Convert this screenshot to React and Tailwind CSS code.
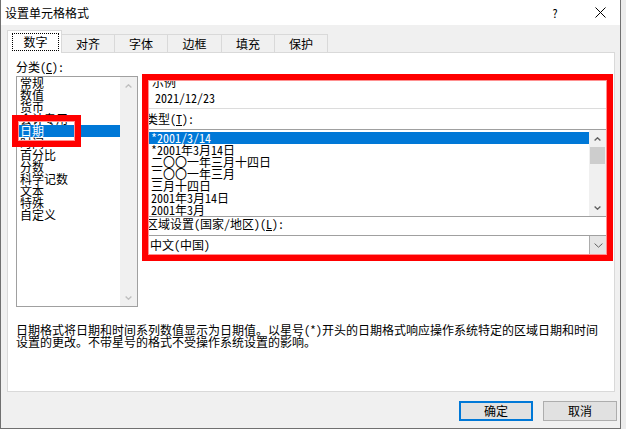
import React from "react";

function Chev({ up, color, w = 7, h = 4, sw = 1.4 }) {
  const pts = up
    ? `0.6,${h - 0.6} ${w / 2},0.8 ${w - 0.6},${h - 0.6}`
    : `0.6,0.6 ${w / 2},${h - 0.8} ${w - 0.6},0.6`;
  return (
    <svg width={w} height={h} viewBox={`0 0 ${w} ${h}`} className="block">
      <polyline points={pts} fill="none" stroke={color} strokeWidth={sw} />
    </svg>
  );
}

const cats = ["常规", "数值", "货币", "会计专用", "日期", "时间", "百分比", "分数", "科学记数", "文本", "特殊", "自定义"];
const types = ["*2001/3/14", "*2001年3月14日", "二〇〇一年三月十四日", "二〇〇一年三月", "三月十四日", "2001年3月14日", "2001年3月"];

export default function App() {
  return (
    <div className="relative w-[626px] h-[429px] overflow-hidden bg-[#ececec] text-[12px] leading-[12px] text-black font-[family-name:'Noto_Sans_Mono_CJK_SC','Noto_Sans_CJK_SC',sans-serif]">
      <div className="flex flex-col w-[621px] h-[429px] border-l border-r border-b border-[#707070] bg-[#f0f0f0]">
        {/* title bar */}
        <div className="flex items-center h-[25px] bg-white pl-[4px] pr-[14px] shrink-0">
          <span>设置单元格格式</span>
          <span className="ml-auto">?</span>
          <svg className="ml-[37px] block" width="11" height="11" viewBox="0 0 11 11">
            <path d="M0.5 0.5 L10.5 10.5 M10.5 0.5 L0.5 10.5" stroke="#000" strokeWidth="1" fill="none" />
          </svg>
        </div>

        {/* tabs */}
        <div className="flex items-end h-[27px] pl-[6px] shrink-0">
          <div className="relative z-10 -mb-px w-[55px] h-[23px] bg-white border border-b-0 border-[#d9d9d9] pt-[2px] pl-[4px]">
            <div className="w-[47px] h-[18px] border border-dotted border-black flex items-center justify-center">数字</div>
          </div>
          <div className="w-[53px] h-[18px] border-t border-r border-[#d9d9d9] flex items-center justify-center">对齐</div>
          <div className="w-[53px] h-[18px] border-t border-r border-[#d9d9d9] flex items-center justify-center">字体</div>
          <div className="w-[54px] h-[18px] border-t border-r border-[#d9d9d9] flex items-center justify-center">边框</div>
          <div className="w-[53px] h-[18px] border-t border-r border-[#d9d9d9] flex items-center justify-center">填充</div>
          <div className="w-[53px] h-[18px] border-t border-r border-[#d9d9d9] flex items-center justify-center">保护</div>
        </div>

        {/* panel */}
        <div className="ml-[6px] w-[608px] h-[340px] shrink-0 bg-white border border-[#d9d9d9] pt-[8px] pl-[8px] flex flex-col">
          <div className="flex items-start">
            {/* left column */}
            <div className="flex flex-col w-[122px]">
              <div>
                分类(<span className="underline">C</span>):
              </div>
              <div className="mt-[3px] flex h-[231px] border border-[#a0a0a0] bg-white">
                <div className="flex-1 flex flex-col">
                  {cats.map((c, i) => (
                    <div
                      key={c}
                      className={i === 4 ? "h-[12px] pl-[3px] bg-[#0078d7] text-white whitespace-nowrap" : "h-[12px] pl-[3px] whitespace-nowrap"}
                    >
                      {c}
                    </div>
                  ))}
                </div>
                <div className="w-[17px] bg-[#f0f0f0] flex flex-col justify-between">
                  <div className="h-[17px] flex items-center justify-center">
                    <Chev up color="#bfbfbf" />
                  </div>
                  <div className="h-[17px] flex items-center justify-center">
                    <Chev color="#bfbfbf" />
                  </div>
                </div>
              </div>
            </div>

            {/* right column */}
            <div className="ml-[8px] w-[461px] flex flex-col pt-[15px]">
              <div className="border-b border-[#dcdcdc] pb-[4px]">
                <div className="pl-[6px]">示例</div>
                <div className="pl-[9px] mt-[4px]">2021/12/23</div>
              </div>
              <div className="mt-[4px]">
                类型(<span className="underline">T</span>):
              </div>
              <div className="mt-[4px] ml-px flex h-[88px] border border-[#a0a0a0] bg-white">
                <div className="flex-1 flex flex-col pt-[2px] pl-px">
                  {types.map((t, i) => (
                    <div
                      key={t}
                      className={i === 0 ? "h-[12px] pl-[2px] bg-[#0078d7] text-white whitespace-nowrap" : "h-[12px] pl-[2px] whitespace-nowrap"}
                    >
                      {t}
                    </div>
                  ))}
                </div>
                <div className="w-[17px] bg-[#f0f0f0] flex flex-col">
                  <div className="h-[17px] flex items-center justify-center">
                    <Chev up color="#606060" />
                  </div>
                  <div className="h-[17px] mx-px bg-[#cdcdcd]" />
                  <div className="flex-1" />
                  <div className="h-[17px] flex items-center justify-center">
                    <Chev color="#606060" />
                  </div>
                </div>
              </div>
              <div className="mt-[1px] whitespace-nowrap">
                区域设置(国家/地区)(<span className="underline">L</span>):
              </div>
              <div className="mt-[5px] ml-px flex items-stretch h-[20px] border border-[#a0a0a0] bg-white">
                <div className="flex-1 flex items-center pl-[2px]">中文(中国)</div>
                <div className="w-[17px] bg-[#e5e5e5] border-l border-[#acacac] flex items-center justify-center">
                  <Chev color="#606060" w={9} h={5} sw={1} />
                </div>
              </div>
            </div>
          </div>

          <div className="mt-[17px] whitespace-nowrap">
            日期格式将日期和时间系列数值显示为日期值。以星号(*)开头的日期格式响应操作系统特定的区域日期和时间
            <br />
            设置的更改。不带星号的格式不受操作系统设置的影响。
          </div>
        </div>

        {/* buttons */}
        <div className="flex justify-end gap-[10px] pt-[9px] pr-[3px]">
          <div className="w-[74px] h-[20px] border-2 border-[#0078d7] bg-[#e1e1e1] flex items-center justify-center">确定</div>
          <div className="w-[74px] h-[20px] border border-[#adadad] bg-[#e1e1e1] flex items-center justify-center">取消</div>
        </div>
      </div>

      {/* red highlight overlays */}
      <div className="absolute left-[142px] top-[74px] w-[471px] h-[187px] border-[6px] border-[#ff0000] shadow-[inset_0_0_0_1px_#ff9090]" />
      <div className="absolute left-[12px] top-[115px] w-[69px] h-[32px] border-[6px] border-[#ff0000] shadow-[inset_0_0_0_1px_#ff9090]" />
    </div>
  );
}
